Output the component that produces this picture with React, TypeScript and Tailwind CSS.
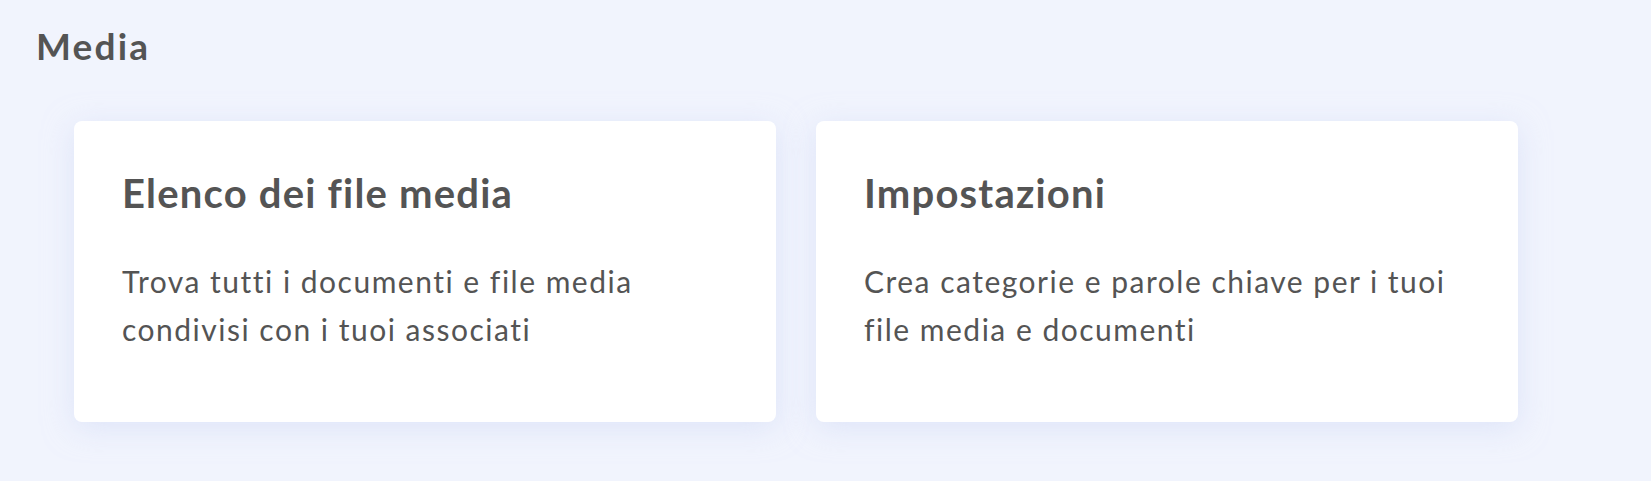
import React from "react";

const cards = [
  {
    title: "Elenco dei file media",
    lines: ["Trova tutti i documenti e file media", "condivisi con i tuoi associati"],
  },
  {
    title: "Impostazioni",
    lines: ["Crea categorie e parole chiave per i tuoi", "file media e documenti"],
  },
];

export default function App() {
  return (
    <div
      className="min-h-[481px] w-full bg-[#f1f4fd] pl-[36px] pt-[24px] text-[#545454]"
      style={{ fontFamily: "Lato, 'Open Sans', sans-serif" }}
    >
      <h1 className="text-[37px] font-bold leading-[44px] tracking-[2.2px]">Media</h1>
      <div className="mt-[53px] ml-[38px] flex gap-[40px]">
        {cards.map((c) => (
          <div
            key={c.title}
            className="h-[301px] w-[702px] rounded-lg bg-white px-[48px] pt-[48px] shadow-[0_6px_30px_rgba(205,215,245,0.55)]"
          >
            <h2 className="mb-[40px] text-[40px] font-bold leading-[48px] tracking-[1.2px]">{c.title}</h2>
            <p className="text-[30px] font-normal leading-[48px] tracking-[1.5px]">
              {c.lines[0]}
              <br />
              {c.lines[1]}
            </p>
          </div>
        ))}
      </div>
    </div>
  );
}
